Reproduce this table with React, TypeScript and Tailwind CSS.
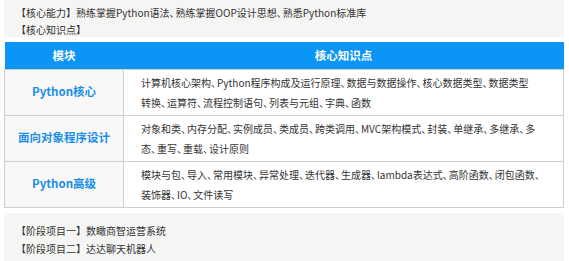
import React from "react"

const font = { fontFamily: '"Noto Sans CJK SC", "Noto Sans", sans-serif' }

const rows = [
  {
    name: "Python核心",
    lines: [
      "计算机核心架构、Python程序构成及运行原理、数据与数据操作、核心数据类型、数据类型",
      "转换、运算符、流程控制语句、列表与元组、字典、函数",
    ],
  },
  {
    name: "面向对象程序设计",
    lines: [
      "对象和类、内存分配、实例成员、类成员、跨类调用、MVC架构模式、封装、单继承、多继承、多",
      "态、重写、重载、设计原则",
    ],
  },
  {
    name: "Python高级",
    lines: [
      "模块与包、导入、常用模块、异常处理、迭代器、生成器、lambda表达式、高阶函数、闭包函数、",
      "装饰器、IO、文件读写",
    ],
  },
]

// the enumeration comma is set narrower than a full em
function Tight({ text }: { text: string }) {
  const parts = text.split("、")
  return (
    <>
      {parts.map((p, i) => (
        <React.Fragment key={i}>
          {p}
          {i < parts.length - 1 && <span className="tracking-[-4px]">、</span>}
        </React.Fragment>
      ))}
    </>
  )
}

export default function App() {
  return (
    <div className="w-[569px] h-[261px] bg-white px-[4px] pr-[5px] text-[#333]" style={font}>
      {/* intro band */}
      <div className="h-[37px] bg-[#f5f5f4] pl-[12px] pt-[4px] text-[10px] leading-[17px]">
        <p>
          <Tight text="【核心能力】熟练掌握Python语法、熟练掌握OOP设计思想、熟悉Python标准库" />
        </p>
        <p>【核心知识点】</p>
      </div>

      <table className="mt-[5px] w-full border-collapse">
        <thead>
          <tr className="h-[27px] bg-[#0b96f7] text-white text-[11.5px] font-bold">
            <th className="w-[119px] text-center font-bold">模块</th>
            <th className="text-center font-bold">核心知识点</th>
          </tr>
        </thead>
        <tbody>
          {rows.map((r) => (
            <tr key={r.name} className="h-[46px]">
              <td className="border border-[#cfcfcf] bg-[#f8f8f8] text-center text-[11.5px] font-bold text-[#1b8fe6]">
                {r.name}
              </td>
              <td className="border border-[#cfcfcf] bg-white pl-[17px] pr-[10px] pt-[3px] pb-[1px] text-[10px] leading-[20px]">
                {r.lines.map((l) => (
                  <div key={l} className="whitespace-nowrap">
                    <Tight text={l} />
                  </div>
                ))}
              </td>
            </tr>
          ))}
        </tbody>
      </table>

      {/* stage projects */}
      <div className="mt-[5px] h-[48px] bg-[#f5f5f4] pl-[12px] pt-[9px] text-[10px] leading-[18px]">
        <p>【阶段项目一】数瞰商智运营系统</p>
        <p>【阶段项目二】达达聊天机器人</p>
      </div>
    </div>
  )
}
